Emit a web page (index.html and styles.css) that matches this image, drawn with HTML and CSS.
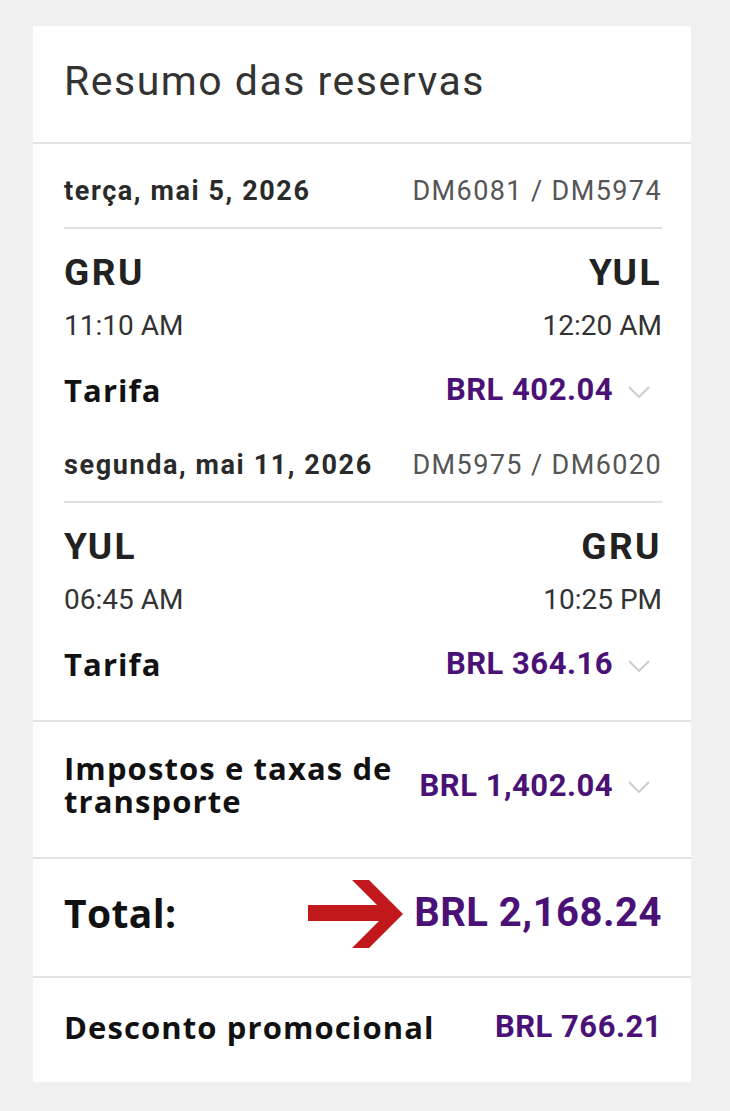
FILE: index.html
```html
<!DOCTYPE html>
<html lang="pt">
<head>
<meta charset="utf-8">
<title>Resumo das reservas</title>
<link rel="stylesheet" href="styles.css">
</head>
<body>
<div class="card">
  <div class="card-header">
    <h2 class="title">Resumo das reservas</h2>
  </div>

  <div class="section flights">
    <div class="leg">
      <div class="date-row">
        <span class="date">terça, mai 5, 2026</span>
        <span class="flight-no">DM6081 / DM5974</span>
      </div>
      <div class="airports">
        <span>GRU</span>
        <span>YUL</span>
      </div>
      <div class="times">
        <span>11:10 AM</span>
        <span>12:20 AM</span>
      </div>
      <div class="fare-row">
        <span class="label">Tarifa</span>
        <span class="price-wrap">
          <span class="price">BRL 402.04</span>
          <svg class="chev" viewBox="0 0 22 12" width="22" height="12"><polyline points="1,1 11,11 21,1"/></svg>
        </span>
      </div>
    </div>

    <div class="leg">
      <div class="date-row">
        <span class="date">segunda, mai 11, 2026</span>
        <span class="flight-no">DM5975 / DM6020</span>
      </div>
      <div class="airports">
        <span>YUL</span>
        <span>GRU</span>
      </div>
      <div class="times">
        <span>06:45 AM</span>
        <span>10:25 PM</span>
      </div>
      <div class="fare-row">
        <span class="label">Tarifa</span>
        <span class="price-wrap">
          <span class="price">BRL 364.16</span>
          <svg class="chev" viewBox="0 0 22 12" width="22" height="12"><polyline points="1,1 11,11 21,1"/></svg>
        </span>
      </div>
    </div>
  </div>

  <div class="section taxes">
    <span class="label two-line">Impostos e taxas de transporte</span>
    <span class="price-wrap">
      <span class="price">BRL 1,402.04</span>
      <svg class="chev" viewBox="0 0 22 12" width="22" height="12"><polyline points="1,1 11,11 21,1"/></svg>
    </span>
  </div>

  <div class="section total">
    <span class="label total-label">Total:</span>
    <svg class="arrow" viewBox="0 0 95 68" width="95" height="68">
      <rect x="0" y="25" width="82" height="16"/>
      <polygon points="44,0 61,0 95,34 61,68 44,68 78,34"/>
    </svg>
    <span class="price total-price">BRL 2,168.24</span>
  </div>

  <div class="section discount">
    <span class="label">Desconto promocional</span>
    <span class="price">BRL 766.21</span>
  </div>
</div>
</body>
</html>
```

FILE: styles.css
```css
* { box-sizing: border-box; }

html, body {
  margin: 0;
  padding: 0;
}

body {
  background: #f0f0f0;
  padding: 26px 0 0 33px;
  font-family: Roboto, "Liberation Sans", sans-serif;
  color: #222;
}

.card {
  width: 658px;
  height: 1056px;
  background: #fff;
}

.card-header {
  height: 118px;
  padding: 0 0 6px 31px;
  display: flex;
  align-items: center;
  border-bottom: 2px solid #e2e2e2;
}

.title {
  margin: 0;
  font-weight: 400;
  font-size: 41px;
  letter-spacing: 1.5px;
  line-height: 44px;
  color: #333;
}

.section {
  padding: 0 29px 0 31px;
  border-bottom: 2px solid #e2e2e2;
}

.flights {
  padding-bottom: 39px;
}

.leg {
  display: flex;
  flex-direction: column;
}

.date-row {
  display: flex;
  justify-content: space-between;
  align-items: center;
  line-height: 30px;
  padding: 32px 0 21px;
  border-bottom: 2px solid #e0e0e0;
}

.leg + .leg .date-row {
  padding-top: 43px;
}

.date {
  font-weight: 700;
  font-size: 27px;
  letter-spacing: 1.6px;
  color: #2a2a2a;
}

.flight-no {
  font-size: 27px;
  letter-spacing: 1.4px;
  color: #555;
}

.airports {
  display: flex;
  justify-content: space-between;
  font-weight: 700;
  font-size: 37px;
  letter-spacing: 2.5px;
  line-height: 40px;
  margin-top: 24px;
  color: #222;
}

.times {
  display: flex;
  justify-content: space-between;
  font-size: 28px;
  line-height: 30px;
  margin-top: 18px;
  color: #333;
}

.fare-row {
  display: flex;
  justify-content: space-between;
  align-items: center;
  line-height: 34px;
  margin-top: 32px;
}

.label {
  font-family: "Open Sans", Roboto, sans-serif;
  font-weight: 700;
  font-size: 31px;
  letter-spacing: 1.1px;
  color: #111;
}

.price-wrap {
  display: flex;
  align-items: center;
}

.price {
  font-weight: 700;
  font-size: 31px;
  letter-spacing: 0.5px;
  color: #4a1277;
}

.chev {
  margin: 4px 12px 0 15px;
  fill: none;
  stroke: #cdcdcd;
  stroke-width: 2;
}

.taxes {
  display: flex;
  justify-content: space-between;
  align-items: center;
  padding-top: 30px;
  padding-bottom: 39px;
}

.two-line {
  width: 352px;
  line-height: 33px;
}

.total {
  position: relative;
  display: flex;
  justify-content: space-between;
  align-items: center;
  height: 119px;
  padding-bottom: 10px;
}

.total-label {
  font-size: 39px;
  letter-spacing: 0.4px;
  line-height: 40px;
}

.total-price {
  font-size: 40px;
  line-height: 40px;
}

.arrow {
  position: absolute;
  left: 275px;
  top: 21px;
  fill: #c0181b;
}

.discount {
  display: flex;
  justify-content: space-between;
  align-items: center;
  border-bottom: none;
  padding-top: 34px;
  padding-bottom: 41px;
  line-height: 30px;
}
```
